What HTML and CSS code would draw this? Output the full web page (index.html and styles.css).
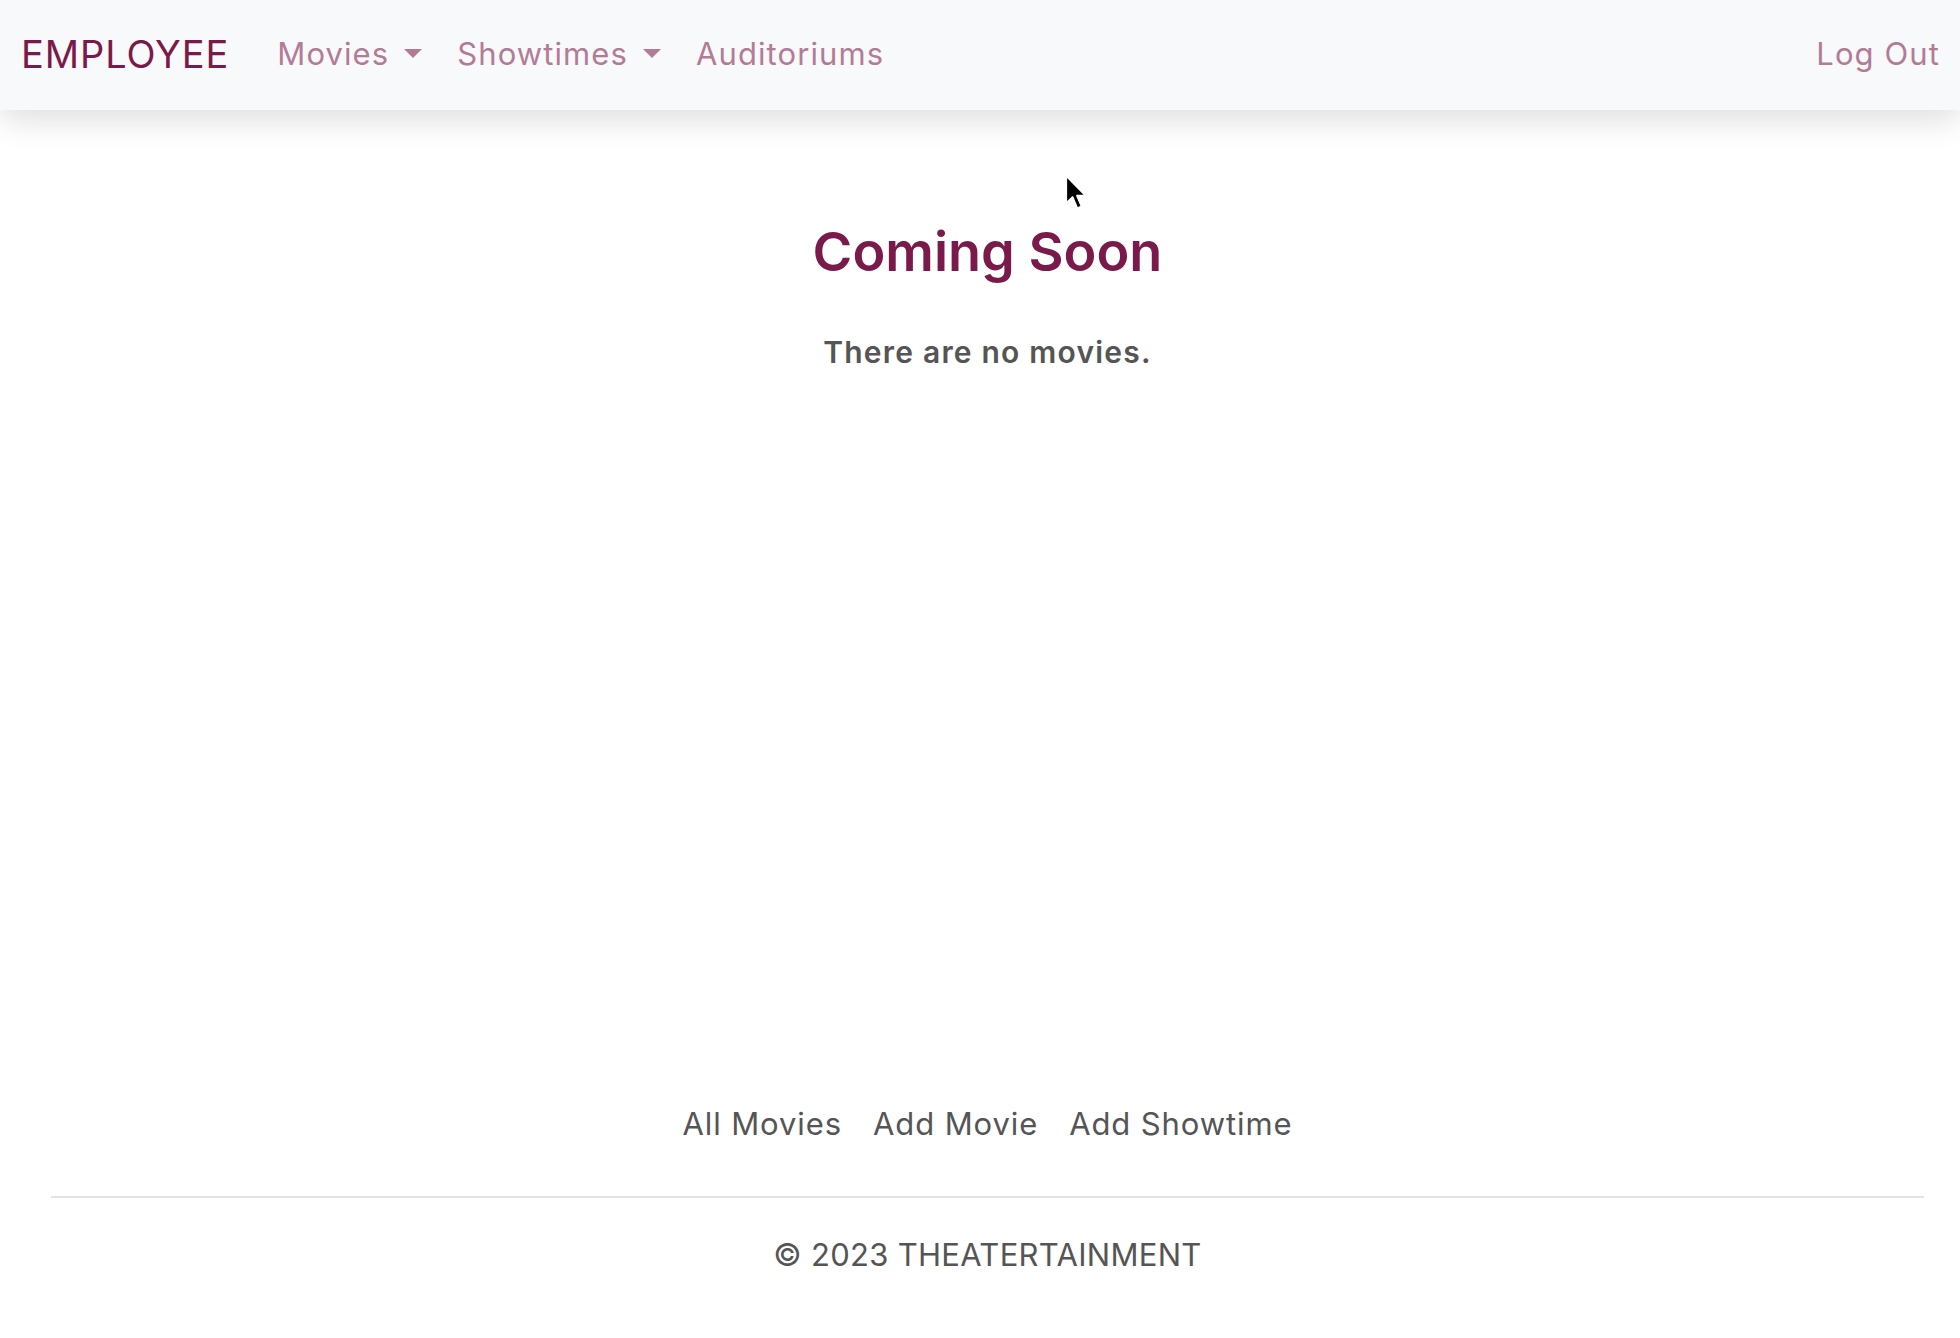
FILE: index.html
```html
<!DOCTYPE html>
<html lang="en">
<head>
<meta charset="utf-8">
<title>Employee - Coming Soon</title>
<link rel="stylesheet" href="styles.css">
</head>
<body>
<nav class="navbar">
  <a class="brand" href="#">EMPLOYEE</a>
  <ul class="nav-links">
    <li><a class="nav-link dropdown" href="#">Movies</a></li>
    <li><a class="nav-link dropdown" href="#">Showtimes</a></li>
    <li><a class="nav-link" href="#">Auditoriums</a></li>
  </ul>
  <a class="nav-link logout" href="#">Log Out</a>
</nav>
<main class="main">
  <h1 class="title">Coming Soon</h1>
  <p class="empty">There are no movies.</p>
</main>
<footer class="footer">
  <ul class="footer-links">
    <li><a href="#">All Movies</a></li>
    <li><a href="#">Add Movie</a></li>
    <li><a href="#">Add Showtime</a></li>
  </ul>
  <hr class="divider">
  <p class="copyright">© 2023 THEATERTAINMENT</p>
</footer>
<svg class="cursor" width="26" height="38" viewBox="0 0 20 30" aria-hidden="true">
  <path d="M1.5 1.5 L1.5 23 L6.5 18.2 L10.2 27 L13.6 25.5 L10 17 L16.8 17 Z" fill="#000" stroke="#fff" stroke-width="1.4" stroke-linejoin="round"/>
</svg>
</body>
</html>
```
FILE: styles.css
```css
* { box-sizing: border-box; }
html, body { margin: 0; padding: 0; }
body {
  font-family: "Inter", "Open Sans", sans-serif;
  background: #fff;
  min-height: 100vh;
  display: flex;
  flex-direction: column;
  color: #555;
}
a { text-decoration: none; }
ul { list-style: none; margin: 0; padding: 0; }

.navbar {
  height: 110px;
  background: #f8f9fa;
  display: flex;
  align-items: center;
  padding: 0 20px 3px 21px;
  box-shadow: 0 10px 30px rgba(0,0,0,0.13);
  position: relative;
  z-index: 2;
}
.brand {
  font-size: 38px;
  color: #7a1a4a;
  margin-right: 48px;
  letter-spacing: 0.9px;
}
.nav-links {
  display: flex;
  gap: 35px;
  flex: 1;
}
.nav-link {
  font-size: 31px;
  color: #b37c96;
  display: flex;
  align-items: center;
  letter-spacing: 1.1px;
}
.nav-link.dropdown::after {
  content: "";
  display: inline-block;
  margin-left: 15px;
  border-top: 9px solid #b37c96;
  border-left: 9px solid transparent;
  border-right: 9px solid transparent;
}

.main {
  flex: 1;
  text-align: center;
  padding: 110px 0 0 15px;
}
.title {
  margin: 0;
  font-size: 54px;
  font-weight: 600;
  color: #7a1a4a;
  line-height: 1.2;
}
.empty {
  margin: 49px 0 0;
  font-size: 30px;
  font-weight: 600;
  color: #555;
  letter-spacing: 1.2px;
}

.footer {
  padding: 0 36px 65px 51px;
  text-align: center;
}
.footer-links {
  display: flex;
  justify-content: center;
  gap: 31px;
}
.footer-links a {
  font-size: 31px;
  color: #555;
  letter-spacing: 0.9px;
}
.divider {
  border: 0;
  border-top: 2px solid #e3e3e3;
  margin: 54px 0 0;
}
.copyright {
  margin: 38px 0 0;
  font-size: 31px;
  color: #555;
  letter-spacing: 0.3px;
}
.cursor {
  position: absolute;
  left: 1064px;
  top: 174px;
}
```
